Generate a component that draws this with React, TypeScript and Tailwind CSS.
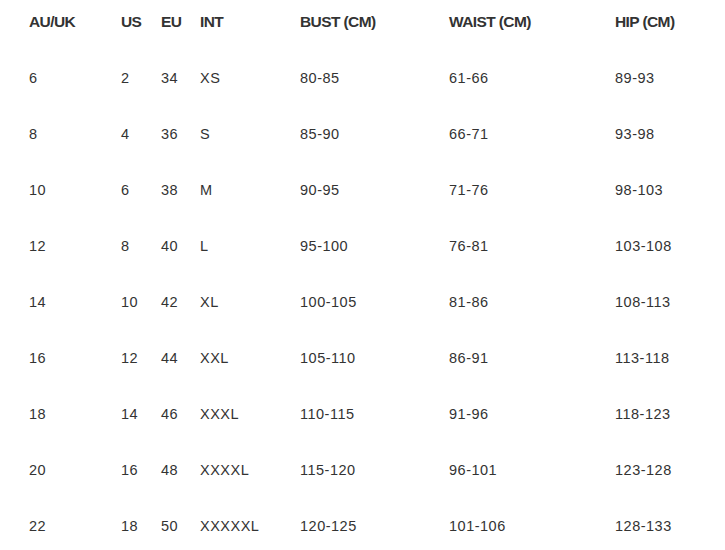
const headers = ["AU/UK", "US", "EU", "INT", "BUST (CM)", "WAIST (CM)", "HIP (CM)"];

const rows = [
  ["6", "2", "34", "XS", "80-85", "61-66", "89-93"],
  ["8", "4", "36", "S", "85-90", "66-71", "93-98"],
  ["10", "6", "38", "M", "90-95", "71-76", "98-103"],
  ["12", "8", "40", "L", "95-100", "76-81", "103-108"],
  ["14", "10", "42", "XL", "100-105", "81-86", "108-113"],
  ["16", "12", "44", "XXL", "105-110", "86-91", "113-118"],
  ["18", "14", "46", "XXXL", "110-115", "91-96", "118-123"],
  ["20", "16", "48", "XXXXL", "115-120", "96-101", "123-128"],
  ["22", "18", "50", "XXXXXL", "120-125", "101-106", "128-133"],
];

const grid = "grid grid-cols-[92px_40px_39px_100px_149px_166px_1fr] items-center";

export default function App() {
  return (
    <div className="w-[725px] h-[550px] bg-white pl-[29px] pt-[1px] text-[#333] font-['Liberation_Sans',Arial,sans-serif] overflow-hidden">
      <div className={`${grid} h-[42px] text-[15.5px] font-bold tracking-[-0.6px]`}>
        {headers.map((h) => (
          <div key={h}>{h}</div>
        ))}
      </div>
      <div className="mt-[8px]">
        {rows.map((r) => (
          <div key={r[0]} className={`${grid} h-[56px] text-[14.5px] tracking-[0.5px]`}>
            {r.map((c, i) => (
              <div key={i}>{c}</div>
            ))}
          </div>
        ))}
      </div>
    </div>
  );
}
